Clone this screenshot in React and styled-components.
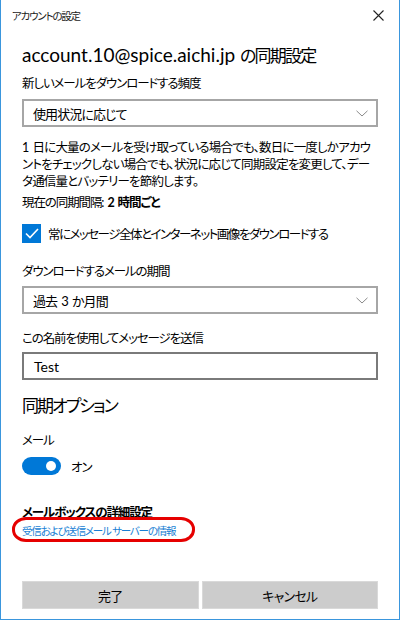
import styled, { createGlobalStyle } from 'styled-components'

const GlobalStyle = createGlobalStyle`
  html, body {
    margin: 0;
    padding: 0;
    background: #ffffff;
  }
  body {
    font-family: Lato, "Noto Sans CJK JP", sans-serif;
    font-feature-settings: "palt";
    color: #000000;
  }
`

const Ventana = styled.div`
  box-sizing: border-box;
  width: 400px;
  height: 620px;
  background: #ffffff;
  border: 1px solid #3a96dd;
  border-top: none;
  display: flex;
  flex-direction: column;
  overflow: hidden;
`

const BarraTitulo = styled.div`
  height: 30px;
  padding: 0 15px 0 11px;
  display: flex;
  align-items: center;
  justify-content: space-between;
  font-size: 10.5px;
  color: #1a1a1a;
  letter-spacing: -1.2px;
`

const Cuerpo = styled.div`
  flex: 1;
  padding: 0 21px 10px 21px;
  display: flex;
  flex-direction: column;
`

const Titulo = styled.div`
  margin-top: 11px;
  font-size: 19px;
  line-height: 28px;
  white-space: nowrap;
`

const TituloJa = styled.span`
  font-size: 17px;
  letter-spacing: -1.8px;
`

const Rotulo = styled.div`
  margin-top: ${p => p.$mt || 0}px;
  font-size: 12.5px;
  line-height: 20px;
  letter-spacing: -1.1px;
  white-space: nowrap;
  font-weight: ${p => (p.$bold ? 700 : 400)};
`

const Selector = styled.div`
  box-sizing: border-box;
  margin-top: ${p => p.$mt || 0}px;
  height: 28px;
  border: 2px solid #a6a6a6;
  padding: 0 8px 0 9px;
  display: flex;
  align-items: center;
  justify-content: space-between;
  font-size: 13px;
  letter-spacing: -0.9px;
`

const Parrafo = styled.p`
  margin: 12px 0 0 0;
  font-size: 12.5px;
  line-height: 17px;
  letter-spacing: -0.8px;
`

const Linea = styled.span`
  display: block;
  white-space: nowrap;
`

const Hueco = styled.span`
  display: inline-block;
  width: ${p => p.$w || 4}px;
`

const Negrita = styled.b`
  font-weight: 700;
`

const FilaCheck = styled.label`
  margin-top: 10px;
  height: 20px;
  display: flex;
  align-items: center;
  gap: 7px;
  font-size: 12.5px;
  letter-spacing: -1.5px;
  white-space: nowrap;
`

const Caja = styled.span`
  width: 19px;
  height: 19px;
  background: #0078d7;
  display: flex;
  align-items: center;
  justify-content: center;
`

const Entrada = styled.div`
  box-sizing: border-box;
  margin-top: 3px;
  height: 28px;
  border: 2px solid #7a7a7a;
  padding: 0 10px;
  display: flex;
  align-items: center;
  font-size: 14px;
`

const Seccion = styled.div`
  margin-top: 13px;
  font-size: 17px;
  line-height: 26px;
  letter-spacing: -2px;
`

const FilaInterruptor = styled.div`
  margin-top: 5px;
  height: 20px;
  display: flex;
  align-items: center;
  gap: 10px;
  font-size: 12.5px;
  letter-spacing: -1px;
`

const Interruptor = styled.span`
  box-sizing: border-box;
  width: 39px;
  height: 18px;
  border-radius: 9px;
  background: #0078d7;
  display: flex;
  align-items: center;
  justify-content: flex-end;
  padding-right: 5px;
`

const Perilla = styled.span`
  width: 10px;
  height: 10px;
  border-radius: 50%;
  background: #ffffff;
`

const BloqueEnlace = styled.div`
  position: relative;
  margin-top: 27px;
`

const Enlace = styled.a`
  display: block;
  font-size: 10.5px;
  line-height: 16px;
  color: #1a7fd4;
  text-decoration: none;
  letter-spacing: -1.2px;
  white-space: nowrap;
  cursor: pointer;
`

const Marca = styled.span`
  position: absolute;
  left: -10px;
  top: 14px;
  width: 183px;
  height: 25px;
  box-sizing: border-box;
  border: 3px solid #e60000;
  border-radius: 14px / 12px;
  pointer-events: none;
`

const FilaBotones = styled.div`
  margin-top: auto;
  display: grid;
  grid-template-columns: 1fr 1fr;
  gap: 3px;
`

const Boton = styled.button`
  height: 28px;
  border: 1px solid #d9d9d9;
  background: #cccccc;
  font-family: inherit;
  font-feature-settings: "palt";
  font-size: 13px;
  color: #000000;
  letter-spacing: -0.8px;
  padding: 0;
`

function Chevron() {
  return (
    <svg width="12" height="7" viewBox="0 0 12 7">
      <path d="M0.5 0.8 L6 6 L11.5 0.8" fill="none" stroke="#8a8a8a" strokeWidth="1" />
    </svg>
  )
}

function App() {
  return (
    <>
      <GlobalStyle />
      <Ventana>
        <BarraTitulo>
          <span>アカウントの設定</span>
          <svg width="11" height="11" viewBox="0 0 11 11">
            <path d="M0.5 0.5 L10.5 10.5 M10.5 0.5 L0.5 10.5" stroke="#222" strokeWidth="1.1" />
          </svg>
        </BarraTitulo>

        <Cuerpo>
          <Titulo>
            account.10@spice.aichi.jp <TituloJa>の同期設定</TituloJa>
          </Titulo>

          <Rotulo $mt={4}>新しいメールをダウンロードする頻度</Rotulo>
          <Selector $mt={5}>
            <span>使用状況に応じて</span>
            <Chevron />
          </Selector>

          <Parrafo>
            <Linea>1<Hueco />日に大量のメールを受け取っている場合でも、数日に一度しかアカウ</Linea>
            <Linea>ントをチェックしない場合でも、状況に応じて同期設定を変更して、デー</Linea>
            <Linea>タ通信量とバッテリーを節約します。</Linea>
          </Parrafo>

          <Rotulo $mt={3}>
            現在の同期間隔:<Hueco /><Negrita>2<Hueco />時間ごと</Negrita>
          </Rotulo>

          <FilaCheck>
            <Caja>
              <svg width="14" height="11" viewBox="0 0 14 11">
                <path d="M1 5.5 L5 9.5 L13 1" fill="none" stroke="#ffffff" strokeWidth="1.6" />
              </svg>
            </Caja>
            常にメッセージ全体とインターネット画像をダウンロードする
          </FilaCheck>

          <Rotulo $mt={19}>ダウンロードするメールの期間</Rotulo>
          <Selector $mt={4}>
            <span>過去<Hueco />3<Hueco />か月間</span>
            <Chevron />
          </Selector>

          <Rotulo $mt={15}>この名前を使用してメッセージを送信</Rotulo>
          <Entrada>Test</Entrada>

          <Seccion>同期オプション</Seccion>

          <Rotulo $mt={12}>メール</Rotulo>
          <FilaInterruptor>
            <Interruptor>
              <Perilla />
            </Interruptor>
            オン
          </FilaInterruptor>

          <BloqueEnlace>
            <Rotulo $bold>メールボックスの詳細設定</Rotulo>
            <Enlace>受信および送信メール サーバーの情報</Enlace>
            <Marca />
          </BloqueEnlace>

          <FilaBotones>
            <Boton>完了</Boton>
            <Boton>キャンセル</Boton>
          </FilaBotones>
        </Cuerpo>
      </Ventana>
    </>
  )
}

export default App
